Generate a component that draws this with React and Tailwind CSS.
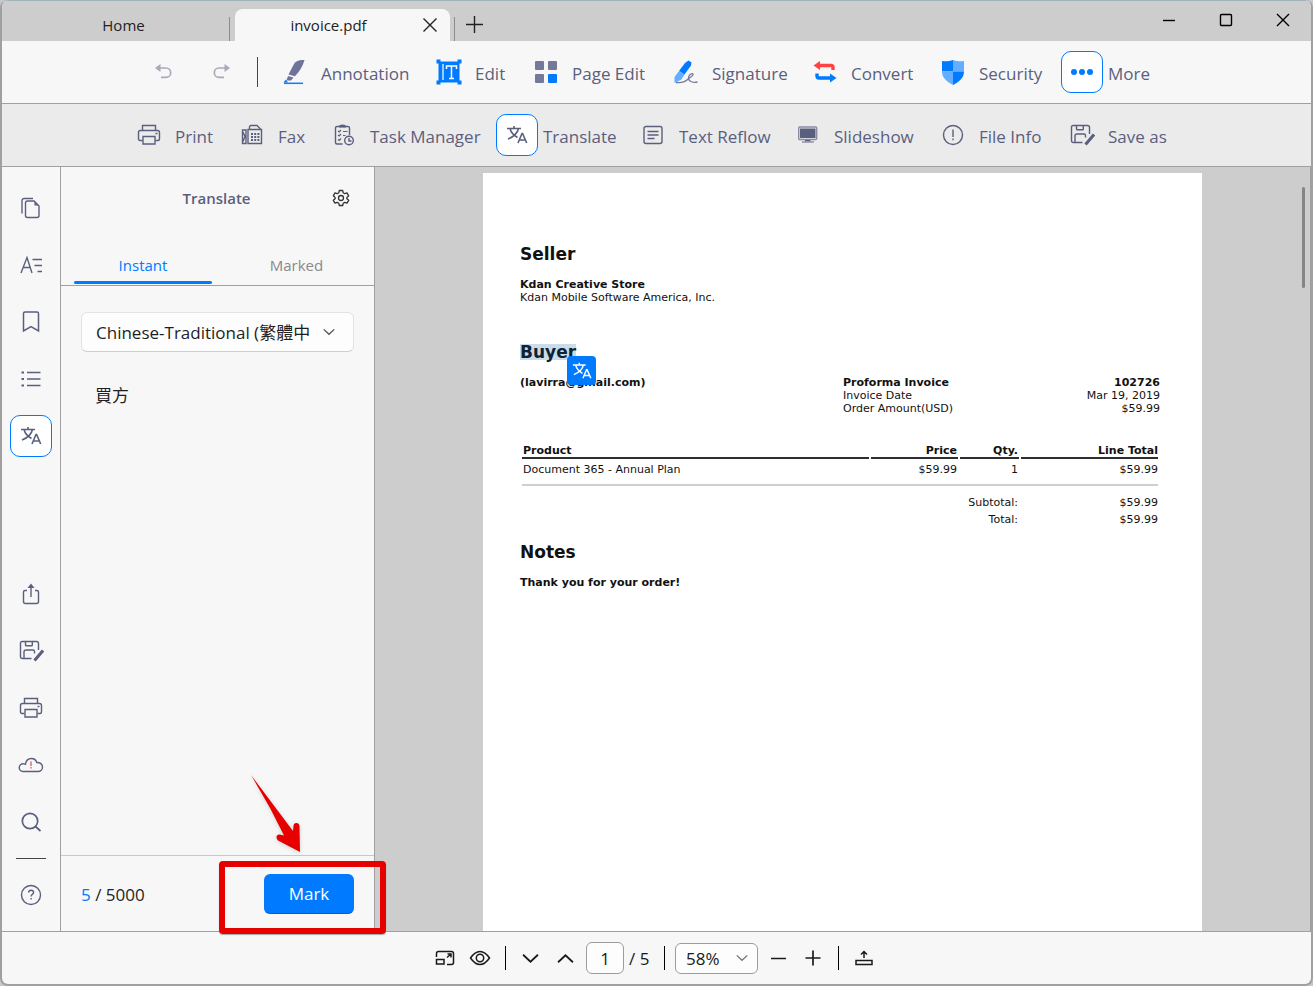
import React from "react";

function Svg({ w = 24, h = 24, vb, children, ...rest }) {
  return (
    <svg width={w} height={h} viewBox={vb || `0 0 ${w} ${h}`} fill="none" stroke="currentColor" strokeWidth="1.4" aria-hidden="true" className="shrink-0" {...rest}>
      {children}
    </svg>
  );
}

const TranslateIcon = ({ size = 22 }) => (
  <Svg w={size} h={size} vb="0 0 22 22" strokeWidth="1.6">
    <path d="M1 4.5h14M8 2v2.500M12.500 4.500C11.500 9 7 13 2 15M4 4.500C5 8.500 8 11.500 11.500 13.500" />
    <path d="M12 19l4-9.500h.6L20.700 19M13.300 16h6" />
  </Svg>
);
const UndoIcon = () => (
  <Svg w={22} h={22} strokeWidth="1.700">
    <path d="M5 7h8a4.700 4.700 0 0 1 0 9.400H8" />
    <path d="M7.500 3v8L2 7z" fill="currentColor" stroke="none" />
  </Svg>
);
const RedoIcon = () => (
  <Svg w={22} h={22} strokeWidth="1.700">
    <path d="M17 7H9a4.700 4.700 0 0 0 0 9.400H14" />
    <path d="M14.500 3v8L20 7z" fill="currentColor" stroke="none" />
  </Svg>
);
const AnnotationIcon = () => (
  <Svg w={26} h={28} stroke="none">
    <path d="M22.500 2q-8-.5-10.500 4L6.500 16.500l6.500 1.700Q20 11 22.500 2z" fill="#6f739a" />
    <path d="M6 18l5.500 1.500-2.500 3H4.500z" fill="#6f739a" />
    <path d="M3.800 21.500l2.200 3H1.500z" fill="#0a7cff" />
    <path d="M2 25.300h19" stroke="#0a7cff" strokeWidth="1.500" />
  </Svg>
);
const EditIcon = () => (
  <Svg w={26} h={26} stroke="none">
    <path d="M2.500 2.500h21v21h-21z" fill="#007aff" />
    <path d="M.5.500h4v4h-4zM21.500.500h4v4h-4zM.5 21.500h4v4h-4zM21.500 21.500h4v4h-4z" fill="#007aff" />
    <path d="M7 5v16" stroke="#fff" strokeWidth="1.200" />
    <path d="M10.500 10V7h10v3M15.500 7v12.500M13 19.500h5" stroke="#fff" strokeWidth="1.500" />
  </Svg>
);
const PageEditIcon = () => (
  <Svg w={24} h={24} stroke="none">
    <rect x="1" y="1" width="9" height="9" rx="1" fill="#74789a" />
    <rect x="14" y="1" width="9" height="9" rx="1" fill="#74789a" />
    <rect x="1" y="14" width="9" height="9" rx="1" fill="#74789a" />
    <rect x="14" y="14" width="9" height="9" rx="1" fill="#007aff" />
  </Svg>
);
const SignatureIcon = () => (
  <Svg w={26} h={26} stroke="none">
    <path d="M12 4L15.500 1.500l3 2-.5 3-6.500 9L6 12z" fill="#007aff" />
    <path d="M6 12l5.500 3.500-3 5L1.500 24V18z" fill="#64aeff" />
    <path d="M3 23.500c5 .5 9-.5 11.500-3 3-2.500 6-3.500 5.500-5.500-1-1.500-5 1.500-4.500 4.500.3 3 4.500 4.500 9 3.500" stroke="#74789a" strokeWidth="1.300" />
  </Svg>
);
const ConvertIcon = () => (
  <Svg w={26} h={26} stroke="none">
    <path d="M7 6.500h12q2 0 2 2V11" stroke="#ff4242" strokeWidth="3.400" />
    <path d="M8 2v9L1.500 6.500z" fill="#ff4242" />
    <path d="M5 14.500v2.500q0 2 2 2h12" stroke="#007aff" strokeWidth="3.400" />
    <path d="M18 14.500v9l6.500-4.500z" fill="#007aff" />
  </Svg>
);
const SecurityIcon = () => (
  <Svg w={24} h={26} stroke="none">
    <path d="M1 2q6 1 11-1v11.500H1z" fill="#007aff" />
    <path d="M12 1q5 2 11 1v10.500H12z" fill="#64aeff" />
    <path d="M1 12.500h11V26C6 23 1 19 1 12.500z" fill="#64aeff" />
    <path d="M12 12.500h11C23 19 18 23 12 26z" fill="#007aff" />
  </Svg>
);
const MoreIcon = () => (
  <Svg w={24} h={8} stroke="none" fill="#007aff">
    <circle cx="4" cy="4" r="3" /><circle cx="12" cy="4" r="3" /><circle cx="20" cy="4" r="3" />
  </Svg>
);
const PrintIcon = () => (
  <Svg w={24} h={22}>
    <path d="M5.500 6.500V1.500h13v5M5.500 16.500H3q-1.500 0-1.500-1.500V8.500q0-2 2-2h17q2 0 2 2V15q0 1.500-1.500 1.500h-2.500" />
    <path d="M6 12.500h12v7.500H6z" />
    <path d="M18.500 9.500h2" />
  </Svg>
);
const FaxIcon = () => (
  <Svg w={22} h={22}>
    <path d="M1.500 6h3.500v13.500H1.500zM2 8l2 4.500-2 5" />
    <path d="M7 5.500h13.500v14H7zM8.500 5.500V3q0-1.500 1.500-1.500h6l3 3v1" />
    <path d="M10 10h8.500M10 13h8.500M10 16h8.500" strokeWidth="1.800" strokeDasharray="2 1.200" />
  </Svg>
);
const TaskIcon = () => (
  <Svg w={22} h={24}>
    <path d="M9.500 21H4q-1.500 0-1.500-1.500V5q0-1.500 1.500-1.500h11q1.500 0 1.500 1.500v7" />
    <path d="M6 3.500q0-2 3.500-2t3.500 2v1H6z" fill="currentColor" stroke="none" />
    <path d="M5 8l1.200 1L8 7M5 12l1.200 1L8 11M5 16.500l1.200 1L8 15.500M10 8.500h4.500M10 12.500h2.500" strokeWidth="1.200" />
    <circle cx="16" cy="17.500" r="4.300" /><path d="M16 15v3h2.500" />
  </Svg>
);
const ReflowIcon = () => (
  <Svg w={22} h={20}>
    <rect x="2" y="1.500" width="18" height="17" rx="2" />
    <path d="M5.500 6.500h11M5.500 10h11M5.500 13.500h7" />
  </Svg>
);
const SlideshowIcon = () => (
  <Svg w={22} h={20}>
    <rect x="1.700" y="2" width="18" height="12.500" rx="1" fill="none" stroke="#8a8ca3" />
    <rect x="3" y="3.500" width="15.500" height="9.500" fill="currentColor" stroke="none" />
    <path d="M8 15h5.500v1.500H8z" fill="currentColor" stroke="none" /><path d="M5 17h12" stroke="#8a8ca3" />
  </Svg>
);
const InfoIcon = () => (
  <Svg w={22} h={22}><circle cx="11" cy="11" r="9.500" /><path d="M11 5.500v7.500M11 14.500v1.700" /></Svg>
);
const SaveAsIcon = () => (
  <Svg w={26} h={22}>
    <path d="M13.500 18.500H4.500q-2 0-2-2V3Q2.500 1.500 4 1.500h14.500q2 0 2 2V10" />
    <path d="M7.500 1.500V5q0 .8.800.8h5.200q.8 0 .8-.8V1.500M6 18.500v-6.500q0-2 2-2h7q1.500 0 1.500 1.500v2" />
    <path d="M16.500 20.500L25 10.500" strokeWidth="3" />
  </Svg>
);
const PagesIcon = () => (
  <Svg w={22} h={24}>
    <path d="M2 17.500V5q0-2.500 2.500-2.500H13" />
    <path d="M14 5H7.500Q5.500 5 5.500 7v12.500q0 2 2 2h9.500q2 0 2-2V10z" />
    <path d="M14.500 5v4.500h4.500z" fill="currentColor" stroke="none" />
  </Svg>
);
const TextListIcon = () => (
  <Svg w={24} h={20}>
    <path d="M2 18L8 2.500 13 18M4 12.500h7.500" />
    <path d="M13.500 4.500h9.500M15.500 10.500H23M18.500 16.500H23" />
  </Svg>
);
const BookmarkIcon = () => (
  <Svg w={20} h={24} strokeWidth="1.500"><path d="M2.500 3.500q0-1.500 1.500-1.500h12q1.500 0 1.500 1.500V21L10 16.500 2.500 21z" /></Svg>
);
const ListIcon = () => (
  <Svg w={22} h={18}>
    <path d="M7 2.500h13.500M7 9h13.500M7 15.500h13.500" />
    <path d="M1.500 2.500h2.500M1.500 9h2.500M1.500 15.500h2.500" strokeWidth="2" />
  </Svg>
);
const ShareIcon = () => (
  <Svg w={20} h={24}>
    <path d="M6 8.500H4Q2.500 8.500 2.500 10v9.500q0 2 2 2h11q2 0 2-2V10q0-1.500-1.500-1.500h-2M10 15V4" />
    <path d="M6.500 6L10 1.500 13.500 6z" fill="currentColor" stroke="none" />
  </Svg>
);
const CloudIcon = () => (
  <Svg w={26} h={18}>
    <path d="M5 15.500a3.700 3.700 0 0 1 .3-7.800q1.500 0 2.200.4C8 4.500 10.500 2.500 13.500 2.500c2.700 0 4.500 1.500 5.300 4 3.300-.2 5.700 1.800 5.700 4.500 0 2.500-2 4.500-4.500 4.500z" />
    <path d="M13 5.500v4.500M13 11v1.500" stroke="#e5484d" strokeWidth="1.200" />
  </Svg>
);
const SearchIcon = () => (
  <Svg w={22} h={22} strokeWidth="1.700"><circle cx="10" cy="10" r="7.700" /><path d="M15.500 15.500l5 4.500" /></Svg>
);
const HelpIcon = () => (
  <Svg w={22} h={22}>
    <circle cx="11" cy="11" r="9.500" />
    <path d="M8.500 8.500q.3-2.300 2.600-2.300 2.500 0 2.500 2.200c0 1.800-2.500 2-2.500 4.100M11.100 14v1.600" />
  </Svg>
);
const GearIcon = () => (
  <Svg w={18} h={18} strokeWidth="1.300">
    <path d="M7.300 1.500h3.400l.5 2.300 1.500.9 2.300-.8 1.700 2.900-1.800 1.600v1.300l1.800 1.600-1.700 2.900-2.300-.8-1.500.9-.5 2.200H7.300l-.5-2.200-1.500-.9-2.300.8-1.700-2.900 1.800-1.600V8.400L1.300 6.800 3 3.900l2.300.8 1.500-.9z" strokeLinejoin="round" />
    <circle cx="9" cy="9" r="2.500" />
  </Svg>
);
const ChevronIcon = ({ up, size = 12, width = 1.3 }) => (
  <Svg w={size} h={size} vb="0 0 16 16" strokeWidth={width}>
    <path d={up ? "M1 11.500L8 5l7 6.500" : "M1 4.500L8 11l7-6.500"} />
  </Svg>
);

const mainTools = [
  ["Annotation", AnnotationIcon, "w-[134px]"],
  ["Edit", EditIcon, "w-[77px]"],
  ["Page Edit", PageEditIcon, "w-[120px]"],
  ["Signature", SignatureIcon, "w-[119px]"],
  ["Convert", ConvertIcon, "w-[108px]"],
  ["Security", SecurityIcon, "w-[109px]"],
  ["More", MoreIcon, "w-[88px]", true],
];
const subTools = [
  ["Print", PrintIcon, "w-[83px]"],
  ["Fax", FaxIcon, "w-[72px]"],
  ["Task Manager", TaskIcon, "w-[153px]"],
  ["Translate", TranslateIcon, "w-[116px]", true],
  ["Text Reflow", ReflowIcon, "w-[135px]"],
  ["Slideshow", SlideshowIcon, "w-[125px]"],
  ["File Info", InfoIcon, "w-[109px]"],
  ["Save as", SaveAsIcon, "w-[104px]"],
];
const sideTop = [["Pages", PagesIcon], ["Outline", TextListIcon], ["Bookmarks", BookmarkIcon], ["List", ListIcon], ["Translate panel", TranslateIcon, true]];
const sideBottom = [["Share", ShareIcon], ["Save copy", SaveAsIcon], ["Print file", PrintIcon], ["Cloud", CloudIcon], ["Search", SearchIcon]];

const boxOn = "flex size-[42px] shrink-0 items-center justify-center rounded-[10px] border border-[#007aff] bg-white";
const boxOff = "flex size-[42px] shrink-0 items-center justify-center";

function Tool({ item: [label, Icon, width, active] }) {
  return (
    <button type="button" className={`flex shrink-0 items-center gap-[5px] whitespace-nowrap text-[17px] leading-6 ${width}`}>
      <span className={active ? boxOn : boxOff}><Icon /></span>
      <span className="pt-[3px]">{label}</span>
    </button>
  );
}

function SideButton({ item: [label, Icon, active] }) {
  return <button type="button" aria-label={label} className={active ? boxOn : boxOff}><Icon /></button>;
}

function TitleBar() {
  return (
    <header className="flex h-[41px] shrink-0 items-end border-t border-[#9fb4b8] bg-[#cdcdcd] text-[15px] text-[#222]">
      <button type="button" className="h-8 w-[227px] pl-4 text-center">Home</button>
      <span className="h-6 w-px self-end bg-[#8c8c8c]" />
      <div className="ml-[5px] flex h-8 w-[215px] items-center rounded-t-lg bg-[#f7f7f7] pr-3">
        <span className="flex-1 text-center">invoice.pdf</span>
        <button type="button" aria-label="Close tab"><Svg w={16} h={16}><path d="M1.500 1.500l13 13M14.500 1.500l-13 13" /></Svg></button>
      </div>
      <span className="ml-1 h-6 w-px bg-[#8c8c8c]" />
      <button type="button" aria-label="New tab" className="mb-2 ml-[11px]"><Svg w={17} h={17}><path d="M8.500 0v17M0 8.500h17" /></Svg></button>
      <div className="mb-[14px] ml-auto mr-[21px] flex gap-[43px] text-black">
        <button type="button" aria-label="Minimize"><Svg w={14} h={14}><path d="M1 7.500h12" /></Svg></button>
        <button type="button" aria-label="Maximize"><Svg w={14} h={14}><rect x="1.500" y="1.500" width="11" height="11" rx="1" /></Svg></button>
        <button type="button" aria-label="Close"><Svg w={14} h={14}><path d="M1 1l12 12M13 1L1 13" /></Svg></button>
      </div>
    </header>
  );
}

function TranslatePanel() {
  return (
    <section className="relative flex w-[314px] shrink-0 flex-col border-r border-[#a0a0a0] bg-[#f7f7f7]">
      <div className="flex h-[62px] items-center pr-6">
        <h2 className="flex-1 pl-10 text-center text-[15px] font-semibold">Translate</h2>
        <button type="button" aria-label="Translation settings" className="text-[#333]"><GearIcon /></button>
      </div>
      <div className="flex h-[57px] items-end border-b border-[#a0a0a0] px-[13px] text-[15px]">
        <button type="button" className="relative h-10 w-[138px] text-[#007aff]">
          Instant
          <span className="absolute inset-x-0 bottom-px h-[3px] rounded-full bg-[#007aff]" />
        </button>
        <button type="button" className="h-10 flex-1 pl-5 text-[#8a8a8a]">Marked</button>
      </div>
      <div className="relative mx-5 mt-[26px] text-[#1f1f1f]">
        <select aria-label="Target language" className="h-10 w-full appearance-none rounded-md border border-[#e3e3e3] border-b-[#cfcfcf] bg-[#fdfdfd] pb-0 pl-[14px] pr-8 pt-[2px] text-[17px]">
          <option>Chinese-Traditional (繁體中</option>
        </select>
        <span className="pointer-events-none absolute inset-y-0 right-[19px] flex items-center text-[#555]"><ChevronIcon width={1.8} /></span>
      </div>
      <p className="mt-8 flex-1 px-[34px] text-[17px] leading-6 text-[#1f1f1f]">買方</p>
      <div className="flex h-[76px] items-center justify-between border-t border-[#c8c8c8] px-5 text-[17px] text-[#1f1f1f]">
        <p className="pt-[3px]"><span className="text-[#007aff]">5</span> / 5000</p>
        <button type="button" className="h-10 w-[90px] rounded-md border-b border-[#0062cc] bg-[#007aff] pt-[2px] text-white">Mark</button>
      </div>
      <div className="pointer-events-none absolute -bottom-[3px] -right-[12px] z-10 h-[73px] w-[167px] rounded-sm border-[6px] border-[#e60000] shadow-[0_1px_1px_#0005]" />
      <svg className="pointer-events-none absolute bottom-[77px] right-[72px] z-10 drop-shadow-sm" width="52" height="80" viewBox="0 0 52 80" aria-hidden="true">
        <path d="M1 1L20 34 34 61.500l-4.500-1Q26.500 60.500 26.500 63q0 2 1.500 3.500L50 78l-.5-26q-.5-3-3-3-3 0-3 3L43 57z" fill="#e60000" />
      </svg>
    </section>
  );
}

const totals = [["Subtotal:", "$59.99"], ["Total:", "$59.99"]];

function Invoice() {
  const th = "border-b-2 border-[#2e2e2e] p-0";
  return (
    <article className="mx-auto mt-[6px] min-h-full w-[719px] bg-white pb-10 pl-[37px] pr-[42px] pt-[69px] font-['DejaVu_Sans',sans-serif] text-[11px] leading-[13px] text-[#111]">
      <h2 className="text-[17px] font-bold leading-6">Seller</h2>
      <p className="mt-3 font-bold">Kdan Creative Store</p>
      <p>Kdan Mobile Software America, Inc.</p>
      <div className="relative mt-10 w-fit">
        <h2 className="my-1 bg-[#c9dceb] text-[17px] font-bold leading-4 text-[#0f2233]">Buyer</h2>
        <button type="button" aria-label="Translate selection" className="absolute left-[47px] top-3 flex size-[29px] items-center justify-center rounded bg-[#007aff] text-white"><TranslateIcon size={20} /></button>
      </div>
      <div className="mt-4 flex">
        <p className="w-[323px] font-bold">(lavirra@gmail.com)</p>
        <div className="flex-1"><p className="font-bold">Proforma Invoice</p><p>Invoice Date</p><p>Order Amount(USD)</p></div>
        <div className="text-right"><p className="font-bold">102726</p><p>Mar 19, 2019</p><p>$59.99</p></div>
      </div>
      <table className="mt-[29px] w-full table-fixed border-separate border-spacing-x-[2px] border-spacing-y-0 text-right">
        <thead>
          <tr>
            <th className={`${th} w-[347px] pl-px text-left`}>Product</th>
            <th className={`${th} w-[87px] pr-px`}>Price</th>
            <th className={`${th} w-[59px] pr-px`}>Qty.</th>
            <th className={th}>Line Total</th>
          </tr>
        </thead>
        <tbody>
          <tr className="h-[25px] align-top">
            <td className="pl-px pt-1 text-left">Document 365 - Annual Plan</td>
            <td className="pr-px pt-1">$59.99</td>
            <td className="pr-px pt-1">1</td>
            <td className="pt-1">$59.99</td>
          </tr>
          <tr className="h-[10px]"><td colSpan={4} className="border-t-2 border-[#cfcfcf] p-0" /></tr>
          {totals.map(([k, v]) => (
            <tr key={k} className="h-[17px]"><td /><td colSpan={2} className="pr-px">{k}</td><td>{v}</td></tr>
          ))}
        </tbody>
      </table>
      <h2 className="mt-3 text-[17px] font-bold leading-6">Notes</h2>
      <p className="mt-3 font-bold">Thank you for your order!</p>
    </article>
  );
}

function Footer() {
  const bar = "h-6 w-px shrink-0 bg-black";
  return (
    <footer className="flex h-[53px] shrink-0 items-center justify-center border-t border-[#a0a0a0] pr-1 text-[17px] text-[#1a1a1a]">
      <button type="button" aria-label="Fit window"><Svg w={20} h={16} strokeWidth="1.500"><path d="M1.500 7V3.500q0-2 2-2h13q2 0 2 2v9q0 2-2 2H12M1.500 9.500h7.500v4.500H1.500zM12 7.500l4-3.500M12.500 4h3.500v3.500" /></Svg></button>
      <button type="button" aria-label="View mode" className="ml-[14px]"><Svg w={22} h={16} strokeWidth="1.500"><path d="M1.500 8Q6 1.500 11 1.500T20.500 8Q16 14.500 11 14.500T1.500 8z" /><circle cx="11" cy="8" r="3.700" /></Svg></button>
      <span className={`${bar} ml-[14px]`} />
      <button type="button" aria-label="Next page" className="ml-4"><ChevronIcon size={17} width={1.7} /></button>
      <button type="button" aria-label="Previous page" className="ml-[18px]"><ChevronIcon up size={17} width={1.7} /></button>
      <input aria-label="Page number" defaultValue="1" className="ml-3 h-8 w-[38px] rounded-md border border-[#9c9c9c] bg-[#fdfdfd] text-center" />
      <span className="ml-[5px] w-[22px] whitespace-nowrap pt-[2px]">/ 5</span>
      <span className={`${bar} ml-[13px]`} />
      <span className="relative ml-[10px]">
        <select aria-label="Zoom" className="block h-[31px] w-[83px] appearance-none rounded-md border border-[#9c9c9c] bg-[#fdfdfd] pl-[10px] pt-[2px]"><option>58%</option></select>
        <span className="pointer-events-none absolute inset-y-0 right-[10px] flex items-center text-[#777]"><ChevronIcon width={1.8} /></span>
      </span>
      <button type="button" aria-label="Zoom out" className="ml-3"><Svg w={16} h={16} strokeWidth="1.500"><path d="M1 8.500h15" /></Svg></button>
      <button type="button" aria-label="Zoom in" className="ml-[19px]"><Svg w={16} h={16} strokeWidth="1.700"><path d="M8 .5v15M.5 8h15" /></Svg></button>
      <span className={`${bar} ml-[17px]`} />
      <button type="button" aria-label="Upload" className="ml-[15px]"><Svg w={20} h={18} strokeWidth="1.500"><path d="M2 11.500h16v4H2zM10 9V3M7 5.500l3-3 3 3" /></Svg></button>
    </footer>
  );
}

export default function App() {
  return (
    <div className="h-screen bg-[#c4c8ca]">
      <div className="flex h-full flex-col overflow-hidden rounded-lg border-x-2 border-b-2 border-[#a0a0a0] bg-[#f7f7f7] font-['Open_Sans','Noto_Sans_CJK_TC',sans-serif] text-[#5b5f7e]">
        <TitleBar />
        <nav aria-label="Main tools" className="flex h-[63px] shrink-0 items-center justify-center gap-5 border-b border-[#a0a0a0] pr-[21px]">
          <div className="-mr-1 flex items-center gap-[15px]">
            <button type="button" aria-label="Undo" className={`${boxOff} opacity-50`}><UndoIcon /></button>
            <button type="button" aria-label="Redo" className={`${boxOff} opacity-50`}><RedoIcon /></button>
            <span className="h-[30px] w-px bg-[#444]" />
          </div>
          {mainTools.map((t) => <Tool key={t[0]} item={t} />)}
        </nav>
        <nav aria-label="More tools" className="flex h-[63px] shrink-0 items-center justify-center gap-5 border-b border-[#a0a0a0] bg-[#ebebeb] pr-5">
          {subTools.map((t) => <Tool key={t[0]} item={t} />)}
        </nav>
        <div className="flex min-h-0 flex-1">
          <aside className="flex w-[59px] shrink-0 flex-col items-center border-r border-[#a0a0a0] pb-[15px] pt-5">
            <div className="flex flex-1 flex-col gap-[15px]">{sideTop.map((t) => <SideButton key={t[0]} item={t} />)}</div>
            <div className="flex flex-col items-center gap-[15px]">
              {sideBottom.map((t) => <SideButton key={t[0]} item={t} />)}
              <span className="h-px w-[30px] bg-[#444]" />
              <SideButton item={["Help", HelpIcon]} />
            </div>
          </aside>
          <TranslatePanel />
          <main className="relative min-w-0 flex-1 overflow-hidden border-r border-[#a0a0a0] bg-[#cdcdcd]">
            <Invoice />
            <span className="absolute right-[5px] top-5 h-[101px] w-[3px] rounded-full bg-[#858585]" />
          </main>
        </div>
        <Footer />
      </div>
    </div>
  );
}
